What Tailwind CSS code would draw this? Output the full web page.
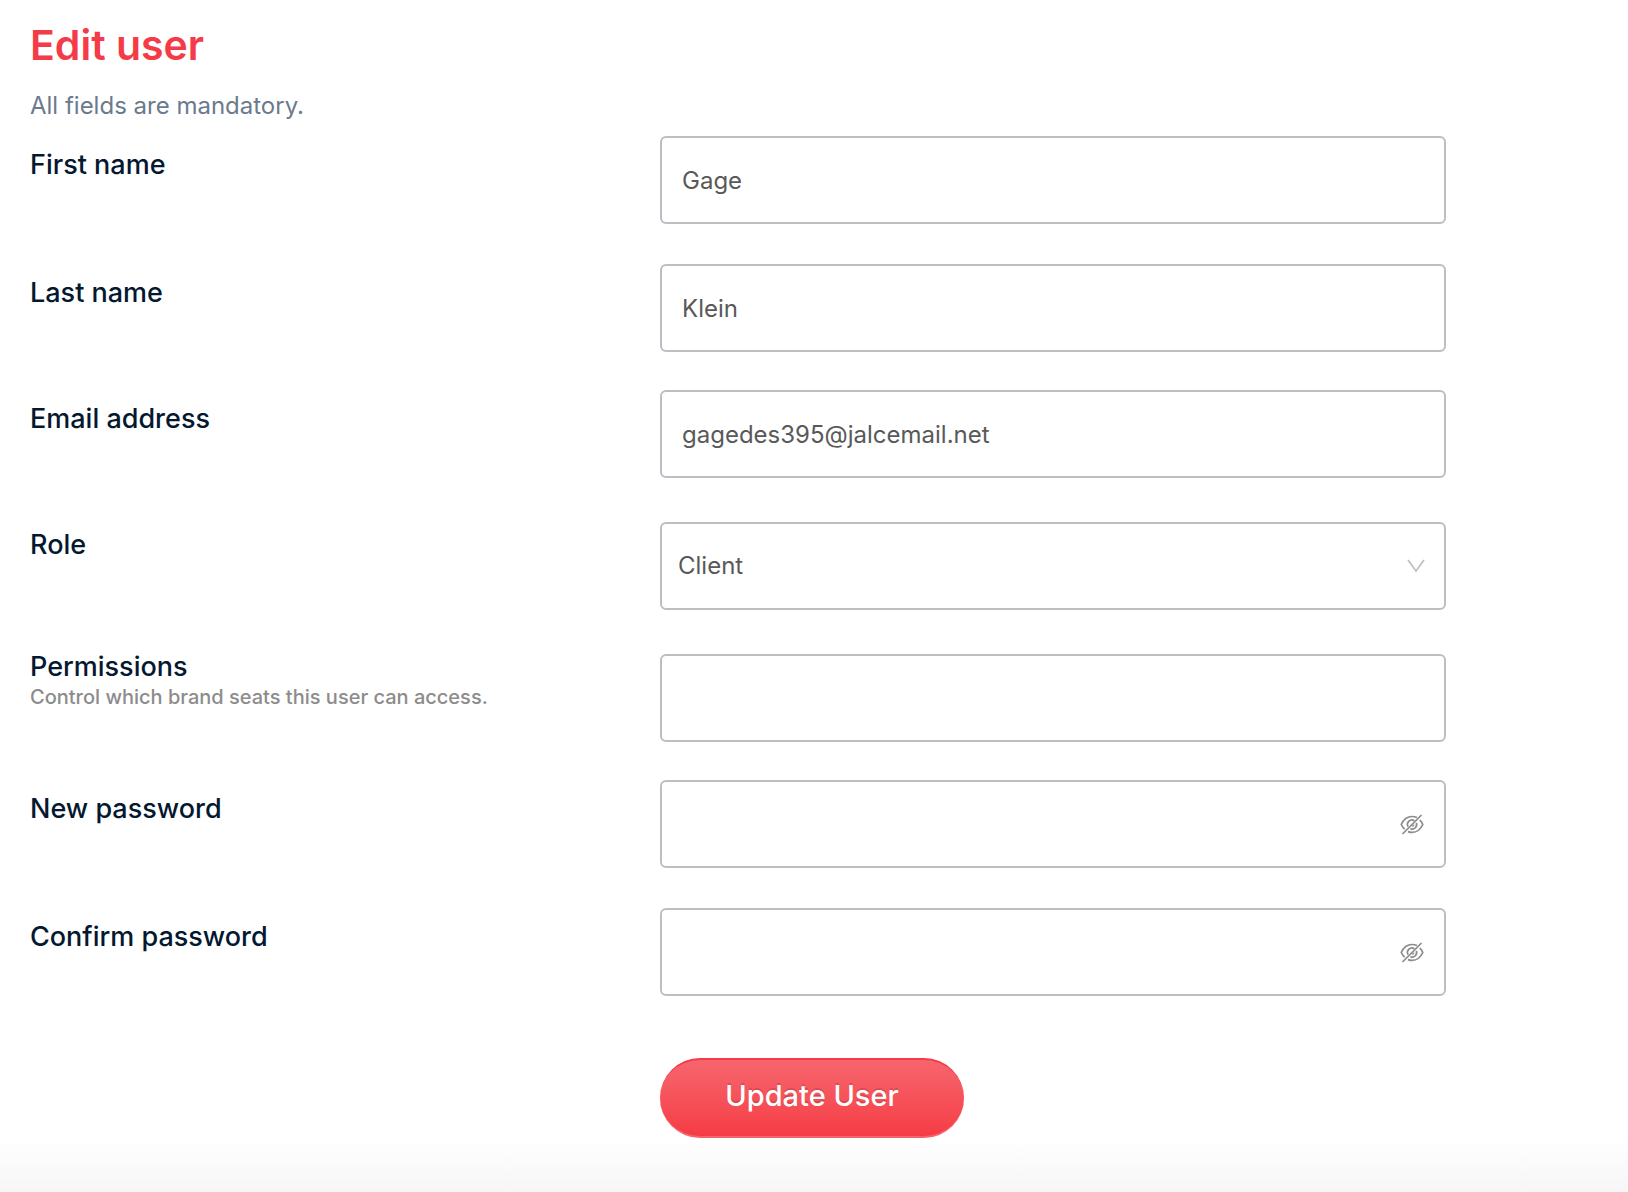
<!DOCTYPE html>
<html lang="en">
<head>
    <meta charset="UTF-8">
    <meta name="viewport" content="width=device-width, initial-scale=1.0">
    <title>Edit user</title>
    <script src="https://cdn.jsdelivr.net/npm/@tailwindcss/browser@4"></script>
</head>
<body class="bg-white min-h-screen flex flex-col font-['Inter',sans-serif]">
    <main class="pt-5 pl-[30px] pr-[182px]">
        <h1 class="text-[41px] leading-[50px] font-semibold text-[#f53b47]">Edit user</h1>
        <p class="mt-5 mb-[14px] text-[24px] leading-8 text-[#6b7a8c]">All fields are mandatory.</p>
        <form id="editForm">
            <div class="grid grid-cols-[630fr_786fr] mb-10">
                <label for="firstName" class="pt-3 text-[27px] leading-[34px] font-medium text-[#04182f]">First name</label>
                <input type="text" id="firstName" name="firstName" value="Gage" class="w-full h-[88px] border-2 border-[#bdbdc4] rounded-md px-5 text-[24px] text-[#595959]" />
            </div>
            <div class="grid grid-cols-[630fr_786fr] mb-[38px]">
                <label for="lastName" class="pt-3 text-[27px] leading-[34px] font-medium text-[#04182f]">Last name</label>
                <input type="text" id="lastName" name="lastName" value="Klein" class="w-full h-[88px] border-2 border-[#bdbdc4] rounded-md px-5 text-[24px] text-[#595959]" />
            </div>
            <div class="grid grid-cols-[630fr_786fr] mb-[38px]">
                <label for="email" class="pt-3 text-[27px] leading-[34px] font-medium text-[#04182f]">Email address</label>
                <input type="email" id="email" name="email" value="gagedes395@jalcemail.net" class="w-full h-[88px] border-2 border-[#bdbdc4] rounded-md px-5 text-[24px] text-[#595959]" />
            </div>
            <div class="grid grid-cols-[630fr_786fr] mb-10">
                <label for="role" class="pt-3 text-[27px] leading-[34px] font-medium text-[#04182f]">Role</label>
                <div class="relative mt-[6px]">
                    <select id="role" name="role" class="block appearance-none w-full h-[88px] border-2 border-[#bdbdc4] rounded-md px-4 text-[24px] text-[#595959] bg-white">
                        <option>Client</option>
                    </select>
                    <svg class="absolute right-5 top-[37px] w-[20px] h-[14px] pointer-events-none" viewBox="0 0 20 14" fill="none" stroke="#bfbfbf" stroke-width="1.7">
                        <path d="M2 1l8 11 8-11" />
                    </svg>
                </div>
            </div>
            <div class="grid grid-cols-[630fr_786fr] mb-[38px]">
                <div>
                    <label for="permissions" class="block text-[27px] leading-[34px] font-medium text-[#04182f]">Permissions</label>
                    <p class="text-[20px] leading-[26px] font-medium text-[#8c8c8c]">Control which brand seats this user can access.</p>
                </div>
                <input type="text" id="permissions" name="permissions" class="mt-1 w-full h-[88px] border-2 border-[#bdbdc4] rounded-md px-5 text-[24px] text-[#595959]" />
            </div>
            <div class="grid grid-cols-[630fr_786fr] mb-10">
                <label for="newPassword" class="pt-3 text-[27px] leading-[34px] font-medium text-[#04182f]">New password</label>
                <div class="relative">
                    <input type="password" id="newPassword" name="newPassword" class="block w-full h-[88px] border-2 border-[#bdbdc4] rounded-md pl-5 pr-16 text-[24px] text-[#595959]" />
                    <button type="button" aria-label="Show password" class="absolute right-[22px] top-8 text-[#8c8c8c]">
                        <svg class="block w-6 h-6" viewBox="0 0 24 24" fill="none" stroke="currentColor" stroke-width="1.7">
                            <path d="M17 5.500C15.500 4.800 13.900 4.500 12 4.500 7.300 4.500 3.700 7 1.200 12.500c.9 1.900 2.100 3.500 3.600 4.700M8 19.600c1.200.5 2.500.8 4 .8 4.700 0 8.300-2.500 10.800-7.900-.8-1.800-1.800-3.200-3-4.300" />
                            <path d="M14.400 8.700A4.500 4.500 0 0 0 8 14.600M10.400 16.700A4.500 4.500 0 0 0 16.300 10.800" />
                            <path d="M12.200 14.300a2 2 0 0 0 1.700-1.700" stroke-width="1.400" />
                            <path d="M2.500 22L21.500 3" />
                        </svg>
                    </button>
                </div>
            </div>
            <div class="grid grid-cols-[630fr_786fr] mb-[62px]">
                <label for="confirmPassword" class="pt-3 text-[27px] leading-[34px] font-medium text-[#04182f]">Confirm password</label>
                <div class="relative">
                    <input type="password" id="confirmPassword" name="confirmPassword" class="block w-full h-[88px] border-2 border-[#bdbdc4] rounded-md pl-5 pr-16 text-[24px] text-[#595959]" />
                    <button type="button" aria-label="Show password" class="absolute right-[22px] top-8 text-[#8c8c8c]">
                        <svg class="block w-6 h-6" viewBox="0 0 24 24" fill="none" stroke="currentColor" stroke-width="1.7">
                            <path d="M17 5.500C15.500 4.800 13.900 4.500 12 4.500 7.300 4.500 3.700 7 1.200 12.500c.9 1.900 2.100 3.500 3.600 4.700M8 19.600c1.200.5 2.500.8 4 .8 4.700 0 8.300-2.500 10.800-7.900-.8-1.800-1.800-3.200-3-4.300" />
                            <path d="M14.400 8.700A4.500 4.500 0 0 0 8 14.600M10.400 16.700A4.500 4.500 0 0 0 16.300 10.800" />
                            <path d="M12.200 14.300a2 2 0 0 0 1.700-1.700" stroke-width="1.400" />
                            <path d="M2.500 22L21.500 3" />
                        </svg>
                    </button>
                </div>
            </div>
            <div class="grid grid-cols-[630fr_786fr]">
                <button type="submit" class="col-start-2 justify-self-start w-[304px] h-20 pb-1 rounded-full border-y-2 border-t-[#f53b47] border-b-[#f7626c] bg-linear-to-b from-[#f7656e] to-[#f53b44] text-white text-[29px] font-medium [text-shadow:0_-2px_0_rgba(0,0,0,0.12)]">Update User</button>
            </div>
        </form>
    </main>
    <div class="grow bg-linear-to-b from-white to-[#f6f6f6]"></div>
</body>
</html>
